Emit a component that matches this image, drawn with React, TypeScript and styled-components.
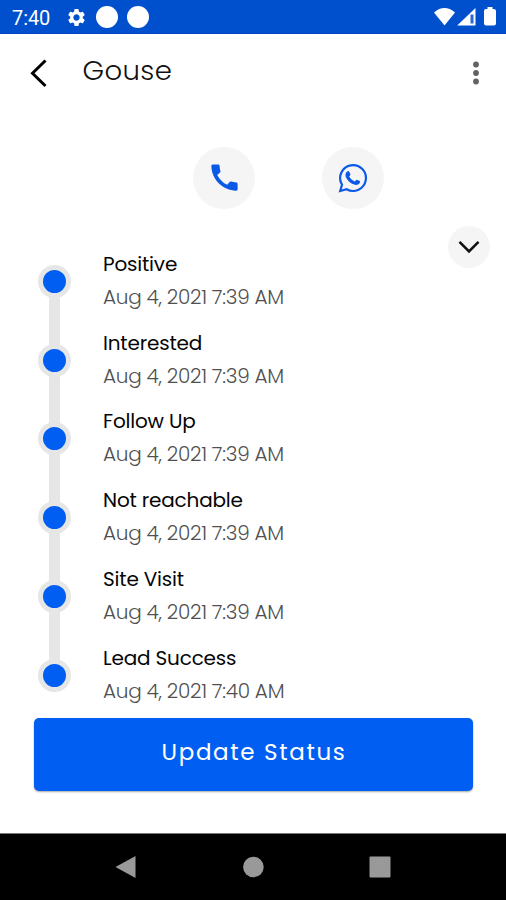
import React from 'react';
import styled, { createGlobalStyle } from 'styled-components';
import { MdSettings, MdCall } from 'react-icons/md';

const GlobalStyle = createGlobalStyle`
  *, *::before, *::after { box-sizing: border-box; }
  body { margin: 0; background: #fff; font-family: Poppins, Inter, sans-serif; }
  svg { display: block; flex: none; }
  button { border: 0; padding: 0; background: none; font: inherit; color: inherit; }
`;

const Screen = styled.div`
  width: 506px;
  height: 900px;
  display: flex;
  flex-direction: column;
  overflow: hidden;
  background: #fff;
`;

const StatusBar = styled.header`
  height: 34px;
  flex: none;
  display: flex;
  align-items: center;
  padding: 1px 10px 0 12px;
  background: #0050ce;
  border-bottom: 1px solid #0044c4;
  color: #fff;
`;

const Clock = styled.span`
  width: 54px;
  padding-top: 1px;
  font: 400 20px/32px Roboto, sans-serif;
  letter-spacing: -0.1px;
`;

const Notifications = styled.div`
  flex: 1;
  display: flex;
  align-items: center;
  gap: 9px;
`;

const NotificationDot = styled.span`
  width: 22px;
  height: 22px;
  border-radius: 50%;
  background: #fff;
`;

const Signals = styled.div`
  display: flex;
  align-items: center;
`;

const AppBar = styled.div`
  height: 79px;
  flex: none;
  display: flex;
  align-items: center;
  padding: 0 26px 1px 29px;
`;

const BackButton = styled.button`
  width: 53.5px;
`;

const Title = styled.h1`
  flex: 1;
  margin: 0;
  padding-bottom: 4px;
  font-size: 27.5px;
  font-weight: 300;
  line-height: 32px;
  letter-spacing: 0.4px;
  color: #111;
`;

const ContactRow = styled.div`
  flex: none;
  display: flex;
  gap: 67px;
  padding: 33.5px 0 0 193px;
`;

const RoundButton = styled.button<{ $size: number }>`
  width: ${(p) => p.$size}px;
  height: ${(p) => p.$size}px;
  flex: none;
  display: flex;
  align-items: center;
  justify-content: center;
  border-radius: 50%;
  background: #f5f5f5;
`;

const History = styled.section`
  flex: none;
  display: flex;
  justify-content: space-between;
  align-items: flex-start;
  height: 509.5px;
  padding: 17px 16px 0 38px;
`;

const Timeline = styled.ol`
  margin: 39.3px 0 0;
  padding: 0;
  list-style: none;
`;

const Step = styled.li`
  display: grid;
  grid-template-columns: 33px auto;
  column-gap: 32px;
  height: 78.75px;
`;

const Rail = styled.div<{ $last: boolean }>`
  display: flex;
  flex-direction: column;
  align-items: center;
  height: 78.75px;
  &::after {
    content: '';
    width: 11px;
    flex: 1;
    margin: -1px 0;
    background: ${(p) => (p.$last ? 'transparent' : '#e6e6e6')};
  }
`;

const Marker = styled.span`
  width: 33px;
  height: 33px;
  border: 5px solid #e6e6e6;
  border-radius: 50%;
  background: #005ff2;
`;

const StepText = styled.div`
  margin-top: -17px;
  white-space: nowrap;
`;

const StepName = styled.div`
  font-size: 20px;
  line-height: 33px;
  letter-spacing: -0.18px;
  color: #050505;
`;

const StepDate = styled.div`
  font-size: 20px;
  font-weight: 300;
  line-height: 33px;
  letter-spacing: -0.2px;
  word-spacing: -0.4px;
  color: #505050;
`;

const UpdateButton = styled.button`
  width: 439px;
  height: 73px;
  flex: none;
  margin-left: 34px;
  padding: 0 0 5px 1px;
  border-radius: 5px;
  background: #005ff2;
  box-shadow: 0 1px 2px rgba(0, 0, 0, 0.35);
  color: #fff;
  font-size: 23px;
  letter-spacing: 1.65px;
`;

const NavigationBar = styled.nav`
  height: 67px;
  flex: none;
  margin-top: auto;
  display: flex;
  align-items: center;
  justify-content: space-between;
  padding: 0 115px;
  background: #000;
  border-top: 1px solid #777;
`;

const steps = [
  { name: 'Positive', date: 'Aug 4, 2021 7:39 AM' },
  { name: 'Interested', date: 'Aug 4, 2021 7:39 AM' },
  { name: 'Follow Up', date: 'Aug 4, 2021 7:39 AM' },
  { name: 'Not reachable', date: 'Aug 4, 2021 7:39 AM' },
  { name: 'Site Visit', date: 'Aug 4, 2021 7:39 AM' },
  { name: 'Lead Success', date: 'Aug 4, 2021 7:40 AM' },
];

const WhatsAppIcon = () => (
  <svg width="30" height="30" viewBox="0 0 30 30" fill="none" stroke="#0b59e6">
    <path d="M2.2 28 4 21.7A12.9 12.9 0 1 1 8.6 26.2Z" strokeWidth="2.2" />
    <path
      d="M9.1 8.6c.8-.8 1.8-.8 2.3.3l1 2.4c.3.7-.9 1.8-1.2 2.3 1.2 2.3 3.2 3.9 5.6 4.9.7-.6 1.5-2 2.2-1.8l2.8 1.4c.9.7-.2 3-1.7 3.5-3.1 1.2-7.1-.8-9.8-3.8-2.7-3.1-4.1-6.5-1.2-9.2Z"
      fill="#0b59e6"
      stroke="none"
    />
  </svg>
);

export default function App() {
  return (
    <Screen>
      <GlobalStyle />
      <StatusBar>
        <Clock>7:40</Clock>
        <Notifications>
          <MdSettings size={21} />
          <NotificationDot />
          <NotificationDot />
        </Notifications>
        <Signals>
          <svg width="62" height="20" viewBox="0 0 62 20" fill="#fff">
            <path d="M0 5.5Q10.5-3.3 21 5.5L10.5 18.5Z" />
            <path d="M41.5 1v17.5H23.2Z" />
            <path d="M36.5 7.5h3v9h-3Z" fill="#2868d8" />
            <path d="M53.5 0h5v2h1.2Q62 2 62 4v12.6q0 2-2 2h-8q-2 0-2-2V4q0-2 2-2h1.5Z" />
          </svg>
        </Signals>
      </StatusBar>
      <AppBar>
        <BackButton aria-label="Back">
          <svg width="20" height="30" viewBox="0 0 20 30" fill="none" stroke="#000" strokeWidth="3">
            <path d="M16.5 2.5 3.5 15.3 16.5 28" />
          </svg>
        </BackButton>
        <Title>Gouse</Title>
        <button aria-label="More">
          <svg width="8" height="24" viewBox="0 0 8 24" fill="#626262">
            <circle cx="4" cy="3.5" r="2.9" />
            <circle cx="4" cy="12" r="2.9" />
            <circle cx="4" cy="20.5" r="2.9" />
          </svg>
        </button>
      </AppBar>
      <ContactRow>
        <RoundButton $size={62} aria-label="Call">
          <MdCall size={35} color="#0b59e6" />
        </RoundButton>
        <RoundButton $size={62} aria-label="WhatsApp">
          <WhatsAppIcon />
        </RoundButton>
      </ContactRow>
      <History>
        <Timeline>
          {steps.map((step, i) => (
            <Step key={step.name}>
              <Rail $last={i === steps.length - 1}>
                <Marker />
              </Rail>
              <StepText>
                <StepName>{step.name}</StepName>
                <StepDate>{step.date}</StepDate>
              </StepText>
            </Step>
          ))}
        </Timeline>
        <RoundButton $size={42} aria-label="Collapse">
          <svg width="22" height="14" viewBox="0 0 22 14" fill="none" stroke="#111" strokeWidth="2.6">
            <path d="M1.5 1.8 11 11.3 20.5 1.8" />
          </svg>
        </RoundButton>
      </History>
      <UpdateButton>Update Status</UpdateButton>
      <NavigationBar>
        <svg width="21" height="24" viewBox="0 0 21 24">
          <path d="M20.5 1v22L.5 12Z" fill="#999" />
        </svg>
        <svg width="22" height="22" viewBox="0 0 22 22">
          <circle cx="11.4" cy="11" r="10.3" fill="#999" />
        </svg>
        <svg width="22" height="22" viewBox="0 0 22 22">
          <rect x=".5" y=".5" width="21" height="21" rx="1" fill="#999" />
        </svg>
      </NavigationBar>
    </Screen>
  );
}
